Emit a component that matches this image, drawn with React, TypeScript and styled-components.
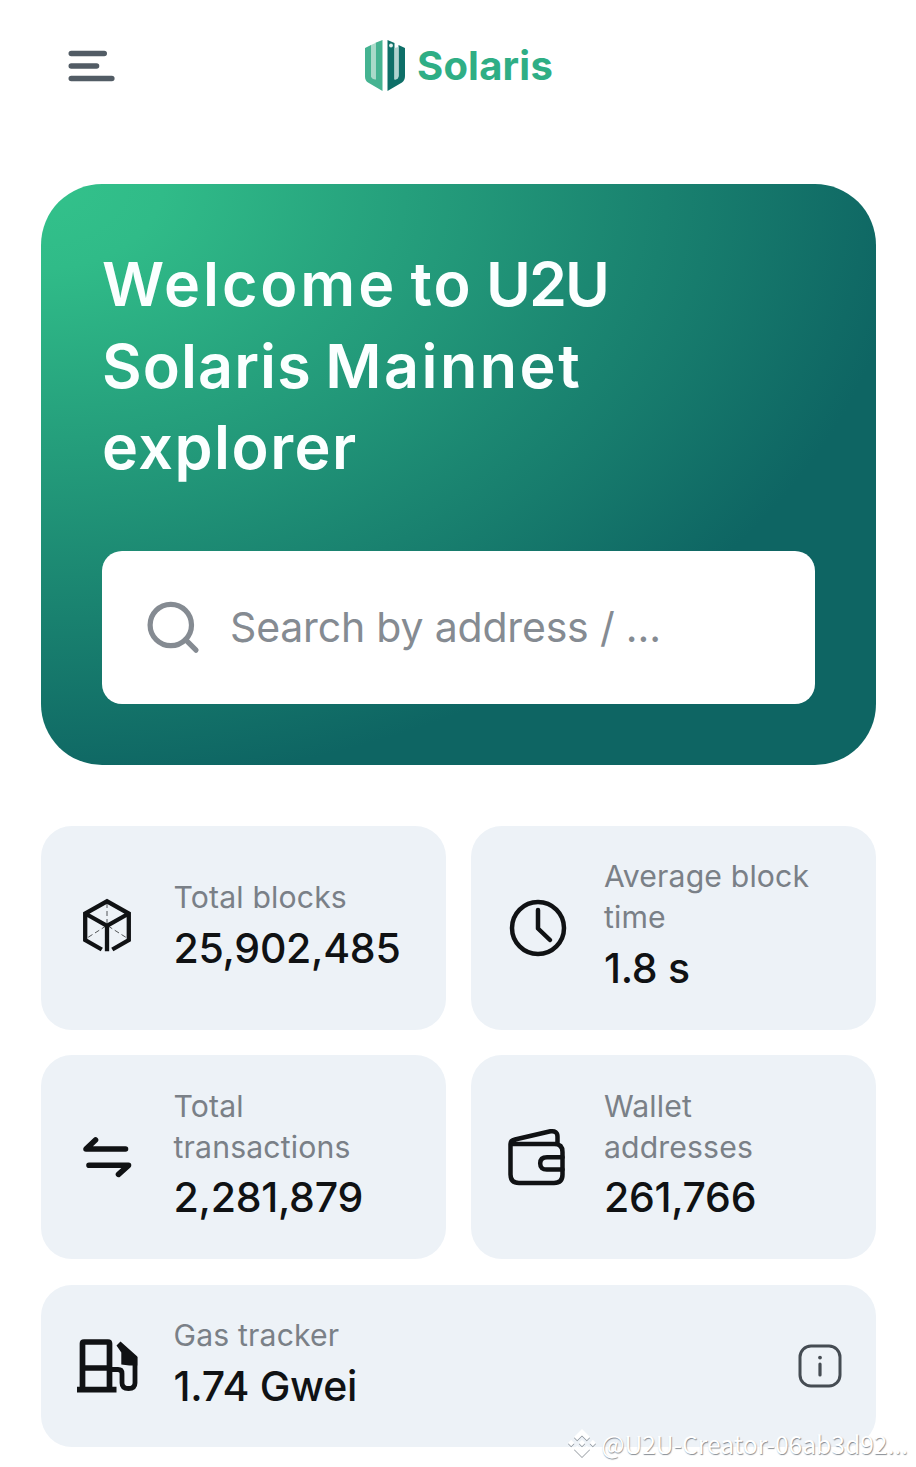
import React from 'react';
import styled, { createGlobalStyle } from 'styled-components';

const GlobalStyle = createGlobalStyle`
  * { box-sizing: border-box; }
  body { margin: 0; background: #fff; font-family: Inter, "Liberation Sans", sans-serif; }
`;

const Page = styled.div`
  position: relative;
  width: 916px;
  height: 1467px;
  overflow: hidden;
  padding: 0 40px 0 41px;
  background: #fff;
`;

const Header = styled.header`
  display: grid;
  grid-template-columns: 1fr auto 1fr;
  align-items: center;
  height: 132px;
  padding: 0 27px;
`;

const Brand = styled.div`
  display: flex;
  align-items: center;
  gap: 11px;
`;

const BrandName = styled.span`
  font-size: 40px;
  line-height: 50px;
  font-weight: 700;
  letter-spacing: 0.2px;
  color: #2fae85;
`;

const Hero = styled.section`
  display: flex;
  flex-direction: column;
  justify-content: space-between;
  height: 581px;
  margin-top: 52px;
  padding: 60px 61px 61px;
  border-radius: 61px;
  background: radial-gradient(104% 104% at 0% 0%, #33c28b 0%, #30bb88 14%, #0e6563 100%);
`;

const Title = styled.h1`
  margin: 0;
  color: #fbffff;
  font-size: 61px;
  line-height: 81.6px;
  font-weight: 600;
  white-space: nowrap;
`;

const TitleLine = styled.span`
  display: block;
  word-spacing: -2px;
`;

const Word = styled.span<{ $tracking: number }>`
  letter-spacing: ${(p) => p.$tracking}px;
`;

const SearchBox = styled.div`
  display: flex;
  align-items: center;
  gap: 28px;
  height: 153px;
  padding: 0 44px;
  border-radius: 20px;
  background: #fff;
  color: #858b92;
`;

const SearchHint = styled.span`
  font-size: 41px;
  line-height: 61px;
  letter-spacing: -0.18px;
  white-space: nowrap;
`;

const Stats = styled.section`
  display: grid;
  grid-template-columns: 1fr 1fr;
  grid-template-rows: 203.5px 203.5px 162.5px;
  gap: 25.8px;
  margin-top: 61px;
`;

const Card = styled.article<{ $wide?: boolean }>`
  display: flex;
  align-items: center;
  grid-column: ${(p) => (p.$wide ? '1 / -1' : 'auto')};
  padding: 0 34px 0 30.5px;
  border-radius: 31px;
  background: #edf2f7;
`;

const IconSlot = styled.div`
  display: flex;
  width: 71px;
  margin-right: 31px;
  justify-content: center;
  flex: none;
`;

const Details = styled.div`
  flex: 1;
`;

const Label = styled.div`
  color: #7a8087;
  font-size: 30.2px;
  line-height: 40.8px;
  letter-spacing: 0.15px;
`;

const Value = styled.div`
  color: #101214;
  font-size: 41px;
  line-height: 61px;
  font-weight: 500;
  letter-spacing: -0.27px;
  white-space: nowrap;
`;

const Watermark = styled.div`
  position: absolute;
  right: 8px;
  bottom: 7px;
  display: flex;
  align-items: center;
  gap: 5px;
  color: #fff;
  font-family: "Noto Sans CJK SC", "Noto Sans", sans-serif;
  font-size: 24.6px;
  line-height: 34px;
  white-space: nowrap;
  text-shadow: 0.7px 1px 1px rgba(70, 80, 90, 0.65);

  svg { filter: drop-shadow(0.6px 1px 0.6px rgba(70, 80, 90, 0.6)); }
`;

const MenuIcon = () => (
  <svg width="47" height="34" viewBox="0 0 47 34" stroke="#525c65" strokeWidth="5.6" strokeLinecap="round">
    <path d="M3.300 4.500H36.200M3.300 17H28.500M3.300 29.500H43.800" />
  </svg>
);

const LogoMark = () => (
  <svg width="42" height="52" viewBox="0 0 42 52">
    <path d="M1 8l6-3v31.500l4.500 3V2.800L18.500 0v51L4 42.500q-3-2-3-6z" fill="#45b391" />
    <path d="M7 5v31.500q1 3 4.500 3V3z" fill="#a9dac9" />
    <path d="M23.500 0l7 3v36.500q4 0 4-4V5l6.500 3v28q0 4-3 6.500L23.500 51z" fill="#0e6f68" />
    <path d="M30.500 8v31.500q4 0 4-4V7z" fill="#b0d3cf" />
    <circle cx="27" cy="5.500" r="1.900" fill="#e4f3ef" />
  </svg>
);

const SearchIcon = () => (
  <svg width="56" height="56" viewBox="0 0 56 56" fill="none" stroke="currentColor" strokeWidth="5.200" strokeLinecap="round">
    <circle cx="24.800" cy="25" r="20.700" />
    <path d="M39.500 39.700l10.500 10.500" />
  </svg>
);

const icon = { fill: 'none', stroke: '#101214', strokeLinecap: 'round', strokeLinejoin: 'round' } as const;

const BlockIcon = () => (
  <svg width="60" height="60" viewBox="0 2 60 60" {...icon} strokeLinecap="butt" strokeLinejoin="miter">
    <path d="M24.800 53.500L8.200 44V17.500L30 5.300l21.800 12.200V44L35.300 53.500M8.200 17.500L30 29.800l21.800-12.300M30 29.800v25.500" strokeWidth="4.300" />
    <path d="M30 7v22M29 30L10 42M31 30l19 12" strokeWidth="1" strokeDasharray="5 3" opacity=".7" />
  </svg>
);

const ClockIcon = () => (
  <svg width="62" height="62" viewBox="-1 0 62 62" {...icon} strokeWidth="4.500">
    <circle cx="31" cy="31" r="26" />
    <path d="M31 13v18.500l12 11.500" />
  </svg>
);

const TransferIcon = () => (
  <svg width="60" height="50" viewBox="0 0 60 50" {...icon} strokeWidth="5.600">
    <path d="M48.500 17H9l9.500-9M12 33.300h39.500l-10 9" />
  </svg>
);

const WalletIcon = () => (
  <svg width="62" height="64" viewBox="0 0 62 64" {...icon} strokeWidth="4.500">
    <path d="M4.500 19v30.500q0 8.500 8.500 8.500h35q8.500 0 8.500-8.500V27q0-8-8-8zQ4.500 15.500 9 14.500L44.500 6.300q7-1 7 5.500v7.500" />
    <path d="M56.500 32.300H41q-6.800 0-6.800 6.200t6.800 6.100h15.500" />
  </svg>
);

const GasIcon = () => (
  <svg width="64" height="60" viewBox="0 1 64 60" {...icon} strokeLinecap="butt" strokeWidth="5.700">
    <path d="M7.500 54V8.500q0-1.500 1.500-1.500h24q1.500 0 1.500 1.500V54M7.500 33h27M2 54.700h39.500" />
    <path d="M37 34.500h6q4 0 4 4v9.500q0 5.500 6.500 5.500t6.500-5.500V22" strokeWidth="4.800" />
    <path d="M41.500 10.500l4-4L62.300 21.500v9h-8l-8-1v-12z" fill="#101214" stroke="none" />
  </svg>
);

const InfoIcon = () => (
  <svg width="44" height="44" viewBox="0 0 44 44" fill="none" stroke="#454c53" strokeLinecap="round">
    <rect x="2" y="2" width="40" height="40" rx="11" strokeWidth="3" />
    <path d="M22 20v11" strokeWidth="3.200" />
    <circle cx="22" cy="13.600" r="1.900" fill="#454c53" stroke="none" />
  </svg>
);

const WatermarkIcon = () => (
  <svg width="28" height="28" viewBox="0 0 28 28" fill="#fff">
    <path d="M14 0l8 8-3.200 3.200L14 6.400l-4.800 4.800L6 8zM3.200 10.800L6.400 14l-3.200 3.200L0 14zM24.800 10.800L28 14l-3.200 3.200-3.200-3.200zM14 10.800l3.200 3.200-3.200 3.200-3.200-3.200zM6 20l3.200-3.200 4.800 4.800 4.800-4.800L22 20l-8 8z" />
  </svg>
);

const stats = [
  { label: ['Total blocks'], value: '25,902,485', icon: <BlockIcon /> },
  { label: ['Average block', 'time'], value: '1.8 s', icon: <ClockIcon /> },
  { label: ['Total', 'transactions'], value: '2,281,879', icon: <TransferIcon /> },
  { label: ['Wallet', 'addresses'], value: '261,766', icon: <WalletIcon /> },
  { label: ['Gas tracker'], value: '1.74 Gwei', icon: <GasIcon />, wide: true },
];

export default function App() {
  return (
    <Page>
      <GlobalStyle />
      <Header>
        <MenuIcon />
        <Brand>
          <LogoMark />
          <BrandName>Solaris</BrandName>
        </Brand>
      </Header>
      <Hero>
        <Title>
          <TitleLine>
            <Word $tracking={2.9}>Welcome</Word> <Word $tracking={2}>to</Word>{' '}
            <Word $tracking={-2}>U2U</Word>
          </TitleLine>
          <TitleLine>
            <Word $tracking={1.1}>Solaris</Word> <Word $tracking={2.5}>Mainnet</Word>
          </TitleLine>
          <TitleLine>
            <Word $tracking={1.5}>explorer</Word>
          </TitleLine>
        </Title>
        <SearchBox>
          <SearchIcon />
          <SearchHint>Search by address / ...</SearchHint>
        </SearchBox>
      </Hero>
      <Stats>
        {stats.map((s) => (
          <Card key={s.value} $wide={s.wide}>
            <IconSlot>{s.icon}</IconSlot>
            <Details>
              {s.label.map((line) => (
                <Label key={line}>{line}</Label>
              ))}
              <Value>{s.value}</Value>
            </Details>
            {s.wide && <InfoIcon />}
          </Card>
        ))}
      </Stats>
      <Watermark>
        <WatermarkIcon />
        <span>@U2U-Creator-06ab3d92...</span>
      </Watermark>
    </Page>
  );
}
